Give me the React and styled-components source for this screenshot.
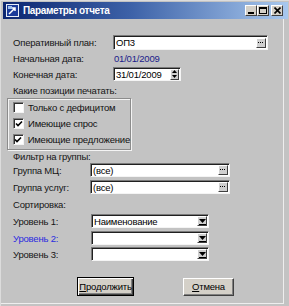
import React from "react";
import styled, { createGlobalStyle } from "styled-components";

const Global = createGlobalStyle`
  html, body {
    margin: 0;
    padding: 0;
    background: #c3c3c3;
  }
  body {
    font-family: "Liberation Sans", Arial, sans-serif;
    font-size: 9.5px;
    letter-spacing: -0.2px;
    color: #111;
  }
`;

const Window = styled.div`
  width: 289px;
  height: 306px;
  box-sizing: border-box;
  background: #c3c3c3;
  border-left: 1px solid #dcdcdc;
  border-top: 1px solid #dcdcdc;
  display: flex;
  flex-direction: column;
  overflow: hidden;
`;

const TitleBar = styled.div`
  height: 17px;
  margin: 1px 1px 0 2px;
  background: linear-gradient(90deg, #0c2670 0%, #3d62a8 45%, #a8c8ee 100%);
  display: flex;
  align-items: center;
  padding-left: 3px;
  gap: 4px;
`;

const Title = styled.span`
  color: #fff;
  font-family: "Liberation Sans", Arial, sans-serif;
  font-weight: bold;
  font-size: 10px;
  letter-spacing: -0.35px;
  flex: 1;
`;

const CaptionButtons = styled.div`
  display: flex;
  margin-right: 5px;
`;

const CaptionBtn = styled.div`
  width: 12px;
  height: 11px;
  margin-left: ${(p) => p.$gap || 0}px;
  background: #d4d0c8;
  box-sizing: border-box;
  border: 1px solid;
  border-color: #fff #404040 #404040 #fff;
  display: flex;
  align-items: center;
  justify-content: center;
`;

const Body = styled.div`
  flex: 1;
  display: flex;
  flex-direction: column;
  padding: 0 0 0 12px;
  margin-right: 5px;
  border-right: 1px solid #eeeeee;
  border-bottom: 1px solid #eeeeee;
  margin-bottom: 2px;
`;

const Row = styled.div`
  display: flex;
  align-items: center;
  height: ${(p) => p.$h || 14}px;
  margin-top: ${(p) => p.$top || 0}px;
`;

const Label = styled.div`
  width: ${(p) => p.$w || 100}px;
  flex-shrink: 0;
  color: ${(p) => (p.$blue ? "#2a2ae0" : "#151515")};
  white-space: nowrap;
`;

const Value = styled.div`
  color: #20208a;
`;

const Field = styled.div`
  width: ${(p) => p.$w}px;
  height: 100%;
  box-sizing: border-box;
  background: #fff;
  border: 1px solid;
  border-color: #7a7a7a #f4f4f4 #f4f4f4 #7a7a7a;
  box-shadow: inset 1px 1px 0 #202020;
  display: flex;
  align-items: center;
  padding: 0 1px 0 2px;
  color: #000;
`;

const FieldText = styled.span`
  flex: 1;
  white-space: nowrap;
  overflow: hidden;
`;

const SmallBtn = styled.div`
  width: ${(p) => p.$w || 10}px;
  height: ${(p) => p.$h || 10}px;
  flex-shrink: 0;
  box-sizing: border-box;
  background: #d0d0d0;
  border: 1px solid;
  border-color: #fff #404040 #404040 #fff;
  display: flex;
  align-items: center;
  justify-content: center;
`;

const GroupBox = styled.div`
  width: 124px;
  height: 52px;
  margin: 0 0 0 -6px;
  box-sizing: border-box;
  border: 1px solid #8c8c8c;
  box-shadow: inset 1px 1px 0 #f4f4f4, 1px 1px 0 #f4f4f4;
  display: flex;
  flex-direction: column;
  padding: 3px 0 0 5px;
  gap: 5px;
`;

const CheckRow = styled.label`
  display: flex;
  align-items: center;
  gap: 4px;
  height: 11px;
  white-space: nowrap;
`;

const CheckBox = styled.span`
  width: 11px;
  height: 11px;
  box-sizing: border-box;
  background: #fff;
  border: 1px solid;
  border-color: #808080 #f4f4f4 #f4f4f4 #808080;
  box-shadow: inset 1px 1px 0 #303030;
  display: flex;
  align-items: center;
  justify-content: center;
`;

const ButtonBar = styled.div`
  display: flex;
  align-items: center;
  margin-top: 16px;
  padding-left: 64px;
  gap: 49px;
`;

const PushButton = styled.div`
  width: ${(p) => p.$w}px;
  height: ${(p) => p.$h}px;
  box-sizing: border-box;
  background: #d4d0c8;
  border: 1px solid;
  border-color: ${(p) => (p.$default ? "#000" : "#fff #404040 #404040 #fff")};
  box-shadow: ${(p) =>
    p.$default
      ? "inset 1px 1px 0 #fff, inset -1px -1px 0 #404040, inset -2px -2px 0 #808080"
      : "inset -1px -1px 0 #808080"};
  display: flex;
  align-items: center;
  justify-content: center;
  color: #000;
  u {
    text-decoration: underline;
  }
`;

const Dots = () => (
  <svg width="6" height="2" viewBox="0 0 6 2">
    <rect x="0" y="0" width="1" height="1" fill="#000" />
    <rect x="2" y="0" width="1" height="1" fill="#000" />
    <rect x="4" y="0" width="1" height="1" fill="#000" />
  </svg>
);

const Spin = () => (
  <svg width="5" height="8" viewBox="0 0 5 8">
    <path d="M2.5 0 L5 3 H0 Z" fill="#000" />
    <path d="M0 5 H5 L2.5 8 Z" fill="#000" />
  </svg>
);

const DownArrow = () => (
  <svg width="7" height="7" viewBox="0 0 7 7">
    <path d="M0 1 H7 L3.5 5 Z" fill="#000" />
    <rect x="0" y="6" width="7" height="1" fill="#000" />
  </svg>
);

const Tick = () => (
  <svg width="8" height="8" viewBox="0 0 8 8">
    <path d="M1 3.5 L3 5.5 L7 1.5" stroke="#000" strokeWidth="1.6" fill="none" />
  </svg>
);

const AppIcon = () => (
  <svg width="13" height="13" viewBox="0 0 13 13">
    <rect x="0.5" y="0.5" width="12" height="12" fill="#1a3a9a" stroke="#e8eef8" />
    <path d="M3 10 L9 4 M6 4 H9 V7" stroke="#fff" strokeWidth="1.5" fill="none" />
    <rect x="2" y="2" width="4" height="3" fill="#9ec0ee" />
  </svg>
);

const EditWithDots = ({ w, text }) => (
  <Field $w={w}>
    <FieldText>{text}</FieldText>
    <SmallBtn $w={10} $h={10}>
      <Dots />
    </SmallBtn>
  </Field>
);

const Combo = ({ text }) => (
  <Field $w={118}>
    <FieldText>{text}</FieldText>
    <SmallBtn $w={10} $h={10}>
      <DownArrow />
    </SmallBtn>
  </Field>
);

const Check = ({ checked, children }) => (
  <CheckRow>
    <CheckBox>{checked && <Tick />}</CheckBox>
    {children}
  </CheckRow>
);

export default function App() {
  return (
    <>
      <Global />
      <Window>
        <TitleBar>
          <AppIcon />
          <Title>Параметры отчета</Title>
          <CaptionButtons>
            <CaptionBtn>
              <svg width="6" height="7" viewBox="0 0 6 7">
                <rect x="0" y="5" width="6" height="2" fill="#000" />
              </svg>
            </CaptionBtn>
            <CaptionBtn>
              <svg width="8" height="7" viewBox="0 0 8 7">
                <rect x="0.5" y="0.5" width="7" height="6" fill="none" stroke="#000" />
                <rect x="0" y="0" width="8" height="2" fill="#000" />
              </svg>
            </CaptionBtn>
            <CaptionBtn $gap={2}>
              <svg width="7" height="7" viewBox="0 0 7 7">
                <path d="M0.5 0.5 L6.5 6.5 M6.5 0.5 L0.5 6.5" stroke="#000" strokeWidth="1.6" />
              </svg>
            </CaptionBtn>
          </CaptionButtons>
        </TitleBar>
        <Body>
          <Row $top={16} $h={15}>
            <Label $w={100}>Оперативный план:</Label>
            <EditWithDots w={155} text="ОП3" />
          </Row>
          <Row $top={1} $h={15}>
            <Label $w={101}>Начальная дата:</Label>
            <Value>01/01/2009</Value>
          </Row>
          <Row $top={1} $h={14}>
            <Label $w={100}>Конечная дата:</Label>
            <Field $w={68}>
              <FieldText>31/01/2009</FieldText>
              <SmallBtn $w={9} $h={11}>
                <Spin />
              </SmallBtn>
            </Field>
          </Row>
          <Row $top={2} $h={15}>
            <Label $w={150}>Какие позиции печатать:</Label>
          </Row>
          <GroupBox>
            <Check>Только с дефицитом</Check>
            <Check checked>Имеющие спрос</Check>
            <Check checked>Имеющие предложение</Check>
          </GroupBox>
          <Row $top={0} $h={13}>
            <Label $w={150}>Фильтр на группы:</Label>
          </Row>
          <Row $top={0} $h={14}>
            <Label $w={77}>Группа МЦ:</Label>
            <EditWithDots w={140} text="(все)" />
          </Row>
          <Row $top={3} $h={14}>
            <Label $w={77}>Группа услуг:</Label>
            <EditWithDots w={140} text="(все)" />
          </Row>
          <Row $top={3} $h={15}>
            <Label $w={150}>Сортировка:</Label>
          </Row>
          <Row $top={2} $h={14}>
            <Label $w={78}>Уровень 1:</Label>
            <Combo text="Наименование" />
          </Row>
          <Row $top={3} $h={14}>
            <Label $w={78} $blue>
              Уровень 2:
            </Label>
            <Combo text="" />
          </Row>
          <Row $top={2} $h={14}>
            <Label $w={78}>Уровень 3:</Label>
            <Combo text="" />
          </Row>
          <ButtonBar>
            <PushButton $w={57} $h={19} $default>
              <span>
                <u>П</u>родолжить
              </span>
            </PushButton>
            <PushButton $w={51} $h={18}>
              <span>
                <u>О</u>тмена
              </span>
            </PushButton>
          </ButtonBar>
        </Body>
      </Window>
    </>
  );
}
